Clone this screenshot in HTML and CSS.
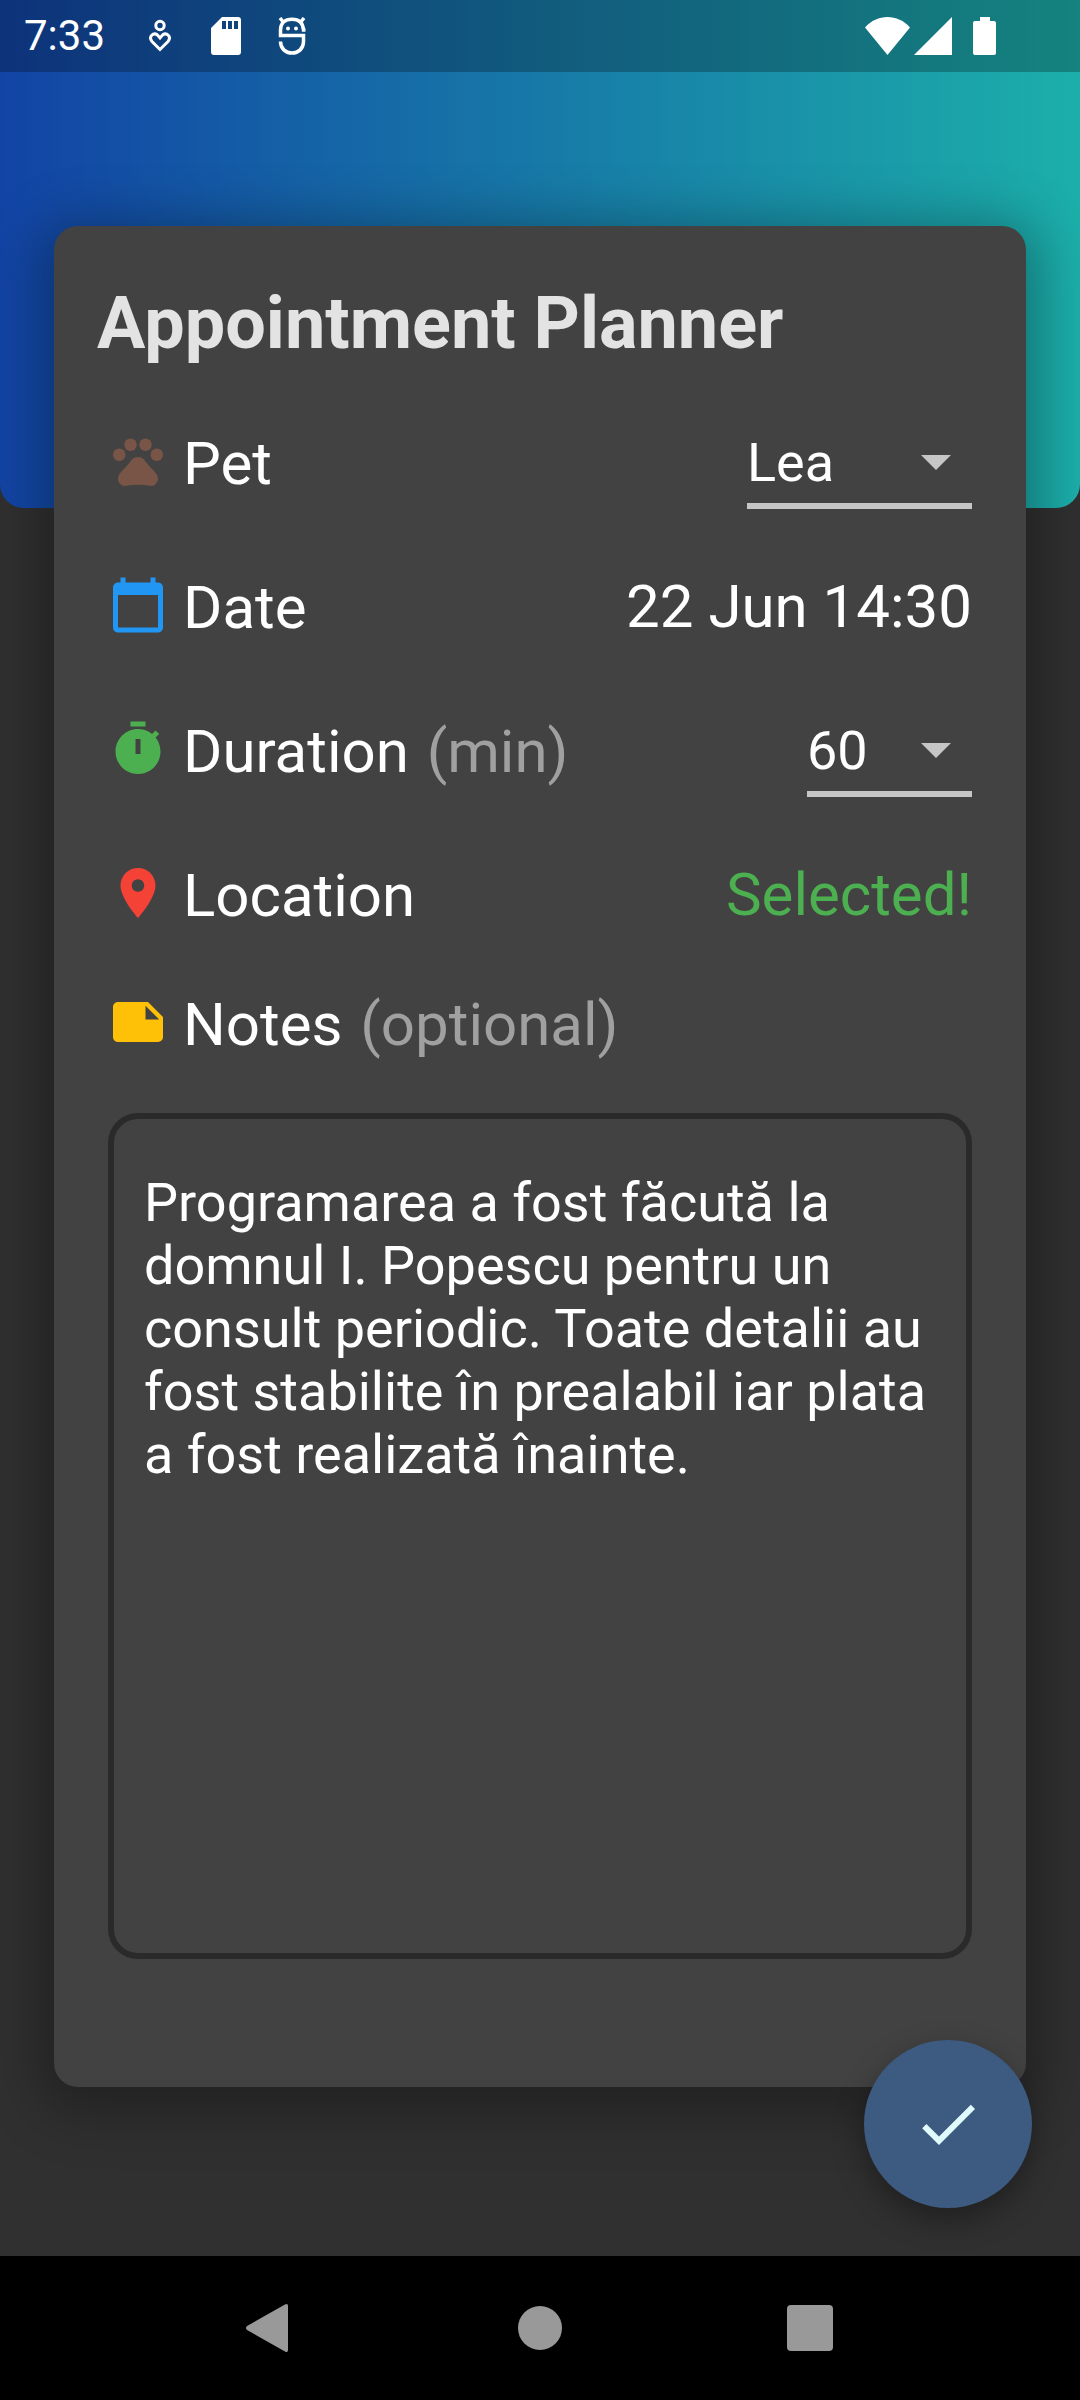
FILE: index.html
```html
<!DOCTYPE html>
<html lang="en">
<head>
<meta charset="utf-8">
<meta name="viewport" content="width=device-width, initial-scale=1">
<title>Appointment Planner</title>
<link rel="stylesheet" href="styles.css">
</head>
<body>
<div class="screen">
  <div class="hero"></div>

  <header class="status-bar">
    <time class="clock">7:33</time>
    <div class="status-notifications">
      <svg class="status-icon" viewBox="0 0 42 42" fill="none" stroke="#fff" stroke-width="3" aria-hidden="true">
        <circle cx="21" cy="8.500" r="4.200"/>
        <path d="M21 32.500l-8-8c-4-5 1.500-9.500 5.500-6.500l2.500 3 2.500-3c4-3 9.500 1.500 5.500 6.500z"/>
      </svg>
      <svg class="status-icon" viewBox="0 0 42 42" fill="#fff" aria-hidden="true">
        <path fill-rule="evenodd" d="M17 0h16q3 0 3 3v32q0 3-3 3H9q-3 0-3-3V11zM17 4v8h4V4zm6 0v8h4V4zm6 0v8h4V4z"/>
      </svg>
      <svg class="status-icon" viewBox="0 0 42 42" fill="none" stroke="#fff" stroke-width="3.500" aria-hidden="true">
        <path d="M34.500 13H32.500C32 6 28 2.200 21 2.200S9.500 6 9.500 13v5.500h23v6c0 7-5 11.500-11.500 11.500S9.500 31.500 9.500 24.500"/>
        <path d="M29 6l4-5M13 6L9 1"/>
        <circle cx="17" cy="11.500" r="2" fill="#fff" stroke="none"/>
        <circle cx="25" cy="11.500" r="2" fill="#fff" stroke="none"/>
      </svg>
    </div>
    <div class="status-system">
      <svg class="wifi-icon" viewBox="0 0 45 38" fill="#fff" aria-hidden="true"><path d="M0 10.500C12-3.500 33-3.500 45 10.500L22.500 38z"/></svg>
      <svg class="signal-icon" viewBox="0 0 38 38" fill="#fff" aria-hidden="true"><path d="M38 0v38H0z"/></svg>
      <svg class="battery-icon" viewBox="0 0 23 38" fill="#fff" aria-hidden="true"><path d="M7 0h10v4h4q2 0 2 2v30q0 2-2 2H2q-2 0-2-2V6q0-2 2-2h5z"/></svg>
    </div>
  </header>

  <main class="content">
    <form class="card" id="planner">
      <h1 class="card-title">Appointment Planner</h1>

      <div class="fields">
        <div class="row">
          <svg class="row-icon row-icon-pet" viewBox="0 0 24 24" aria-hidden="true"><circle cx="4.500" cy="9.500" r="2.500"/><circle cx="9" cy="5.500" r="2.500"/><circle cx="15" cy="5.500" r="2.500"/><circle cx="19.500" cy="9.500" r="2.500"/><path d="M17.340 14.860c-.87-1.020-1.600-1.890-2.480-2.910-.46-.54-1.050-1.080-1.750-1.320-.11-.04-.22-.07-.33-.09-.25-.04-.52-.04-.78-.04s-.53 0-.79.050c-.11.020-.22.050-.33.090-.7.240-1.280.78-1.750 1.320-.87 1.020-1.600 1.890-2.480 2.910-1.310 1.310-2.920 2.760-2.620 4.790.29 1.020 1.020 2.030 2.330 2.320.73.150 3.060-.44 5.540-.44h.18c2.480 0 4.810.58 5.540.44 1.310-.29 2.040-1.310 2.330-2.320.31-2.040-1.300-3.490-2.610-4.800z"/></svg>
          <label class="row-label" for="pet">Pet</label>
          <div class="dropdown dropdown-wide">
            <select class="dropdown-select" id="pet"><option>Lea</option></select>
            <svg class="dropdown-arrow" viewBox="0 0 24 24" aria-hidden="true"><path d="M7 10l5 5 5-5z"/></svg>
          </div>
        </div>

        <div class="row">
          <svg class="row-icon row-icon-date" viewBox="0 0 24 24" aria-hidden="true"><path d="M20 3h-1V1h-2v2H7V1H5v2H4c-1.100 0-2 .9-2 2v16c0 1.100.9 2 2 2h16c1.100 0 2-.9 2-2V5c0-1.100-.9-2-2-2zm0 18H4V8h16v13z"/></svg>
          <label class="row-label" for="date">Date</label>
          <button class="row-value" id="date" type="button">22 Jun 14:30</button>
        </div>

        <div class="row">
          <svg class="row-icon row-icon-duration" viewBox="0 0 24 24" aria-hidden="true"><path d="M9 1h6v2H9zM19.030 7.390l1.420-1.420c-.43-.51-.9-.99-1.410-1.410l-1.420 1.420C16.070 4.740 14.120 4 12 4c-4.970 0-9 4.030-9 9s4.020 9 9 9 9-4.030 9-9c0-2.120-.74-4.070-1.970-5.610zM13 14h-2V8h2v6z"/></svg>
          <label class="row-label" for="duration">Duration <span class="hint">(min)</span></label>
          <div class="dropdown">
            <select class="dropdown-select" id="duration"><option>60</option></select>
            <svg class="dropdown-arrow" viewBox="0 0 24 24" aria-hidden="true"><path d="M7 10l5 5 5-5z"/></svg>
          </div>
        </div>

        <div class="row">
          <svg class="row-icon row-icon-location" viewBox="0 0 24 24" aria-hidden="true"><path d="M12 2C8.130 2 5 5.130 5 9c0 5.250 7 13 7 13s7-7.750 7-13c0-3.870-3.130-7-7-7zm0 9.500c-1.380 0-2.500-1.120-2.500-2.500s1.120-2.500 2.500-2.500 2.500 1.120 2.500 2.500-1.120 2.500-2.500 2.500z"/></svg>
          <label class="row-label" for="location">Location</label>
          <button class="row-value row-value-selected" id="location" type="button">Selected!</button>
        </div>

        <div class="row row-compact">
          <svg class="row-icon row-icon-notes" viewBox="0 0 24 24" aria-hidden="true"><path d="M22 10l-6-6H4c-1.100 0-2 .9-2 2v12.010c0 1.100.9 1.990 2 1.990l16-.01c1.100 0 2-.89 2-1.990v-8zm-7-4.500l5.500 5.500H15V5.500z"/></svg>
          <label class="row-label" for="notes">Notes <span class="hint">(optional)</span></label>
        </div>

        <textarea class="notes" id="notes" spellcheck="false">Programarea a fost făcută la domnul I. Popescu pentru un consult periodic. Toate detalii au fost stabilite în prealabil iar plata a fost realizată înainte.</textarea>
      </div>
    </form>

    <button class="fab" type="submit" form="planner" aria-label="Save appointment">
      <svg class="fab-icon" viewBox="0 0 24 24" aria-hidden="true"><path d="M9 16.200L4.800 12l-1.400 1.400L9 19 21 7l-1.400-1.400L9 16.200z"/></svg>
    </button>
  </main>

  <nav class="nav-bar" aria-label="System navigation">
    <button class="nav-button" type="button" aria-label="Back"><svg class="nav-icon" viewBox="0 0 48 48"><path d="M42 2v44q0 3-3 1.500L1 26q-2-2 0-4L39 .5Q42-1 42 2z"/></svg></button>
    <button class="nav-button" type="button" aria-label="Home"><svg class="nav-icon" viewBox="0 0 48 48"><circle cx="24" cy="24" r="22"/></svg></button>
    <button class="nav-button" type="button" aria-label="Recent apps"><svg class="nav-icon" viewBox="0 0 48 48"><rect x="1" y="1" width="46" height="46" rx="4"/></svg></button>
  </nav>
</div>
</body>
</html>
```
FILE: styles.css
```css
* {
  box-sizing: border-box;
}

body {
  margin: 0;
  background: #303030;
  color: #fff;
  font-family: Roboto, "Liberation Sans", sans-serif;
}

button,
select,
textarea {
  margin: 0;
  padding: 0;
  border: 0;
  background: none;
  color: inherit;
  font: inherit;
}

svg {
  display: block;
  flex: none;
}

.screen {
  position: relative;
  isolation: isolate;
  display: flex;
  flex-direction: column;
  min-height: 100vh;
}

/* Gradient panel that sits behind the status bar and the top of the card */
.hero {
  position: absolute;
  z-index: -1;
  top: 0;
  left: 0;
  right: 0;
  height: 508px;
  border-radius: 0 0 24px 24px;
  background: linear-gradient(90deg, #1244a5, #1cafaa);
}

.status-bar {
  display: flex;
  align-items: center;
  height: 72px;
  padding: 0 84px 0 24px;
  background: rgba(0, 0, 0, 0.25);
}

.clock {
  font-size: 42px;
  line-height: 72px;
}

.status-notifications {
  display: flex;
  gap: 24px;
  margin-left: 34px;
  padding-top: 4px;
}

.status-icon {
  width: 42px;
  height: 42px;
}

.status-system {
  display: flex;
  align-items: center;
  margin-left: auto;
}

.wifi-icon {
  width: 45px;
  height: 38px;
}

.signal-icon {
  width: 38px;
  height: 38px;
  margin: 0 21px 0 4px;
}

.battery-icon {
  width: 23px;
  height: 38px;
}

.content {
  position: relative;
  flex: 1;
  display: flex;
  flex-direction: column;
  padding: 154px 5% 169px;
}

.card {
  flex: 1;
  display: flex;
  flex-direction: column;
  padding-bottom: 128px;
  border-radius: 24px;
  background: #424242;
  box-shadow: 0 10px 54px 16px rgba(0, 0, 0, 0.3);
}

.card-title {
  margin: 0;
  padding: 56px 43px 23px;
  color: #e3e3e3;
  font-size: 72px;
  line-height: 84px;
}

.fields {
  flex: 1;
  display: flex;
  flex-direction: column;
  padding: 0 54px;
}

.row {
  display: flex;
  align-items: center;
  gap: 15px;
  height: 144px;
}

.row-compact {
  height: 114px;
}

.row-icon {
  width: 60px;
  height: 60px;
}

.row-icon-pet { fill: #795548; }
.row-icon-date { fill: #2196f3; }
.row-icon-duration { fill: #4caf50; }
.row-icon-location { fill: #f44336; }
.row-icon-notes { fill: #ffc107; }

.row-label,
.row-value {
  font-size: 60px;
  line-height: 72px;
}

.row-label {
  flex: 1;
  padding-top: 6px;
}

.row-value {
  padding-top: 4px;
}

.hint {
  margin-left: 3px;
  color: #a0a0a0;
}

.row-value-selected {
  color: #4caf50;
}

.dropdown {
  display: grid;
  align-items: center;
  width: 165px;
}

.dropdown-wide {
  width: 225px;
}

.dropdown-select,
.dropdown-arrow {
  grid-area: 1 / 1;
}

.dropdown-select {
  appearance: none;
  height: 96px;
  padding-top: 8px;
  border-bottom: 6px solid #c6c6c6;
  border-radius: 0;
  font-size: 54px;
}

.dropdown-arrow {
  justify-self: end;
  width: 72px;
  height: 72px;
  fill: #c6c6c6;
  pointer-events: none;
}

.notes {
  flex: 1;
  min-height: 300px;
  margin-top: 34px;
  padding: 52px 30px;
  border: 6px solid #2a2a2a;
  border-radius: 30px;
  font-size: 54px;
  line-height: 63px;
  resize: none;
}

.fab {
  position: absolute;
  right: 48px;
  bottom: 48px;
  display: grid;
  place-items: center;
  width: 168px;
  height: 168px;
  border-radius: 50%;
  background: #3d5a80;
  box-shadow: 0 12px 30px rgba(0, 0, 0, 0.35);
}

.fab-icon {
  width: 72px;
  height: 72px;
  fill: #e0fbfc;
}

.nav-bar {
  display: flex;
  height: 144px;
  padding: 0 12.5%;
  background: #000;
}

.nav-button {
  flex: 1;
  display: grid;
  place-items: center;
}

.nav-icon {
  width: 48px;
  height: 48px;
  fill: #999;
}
```
